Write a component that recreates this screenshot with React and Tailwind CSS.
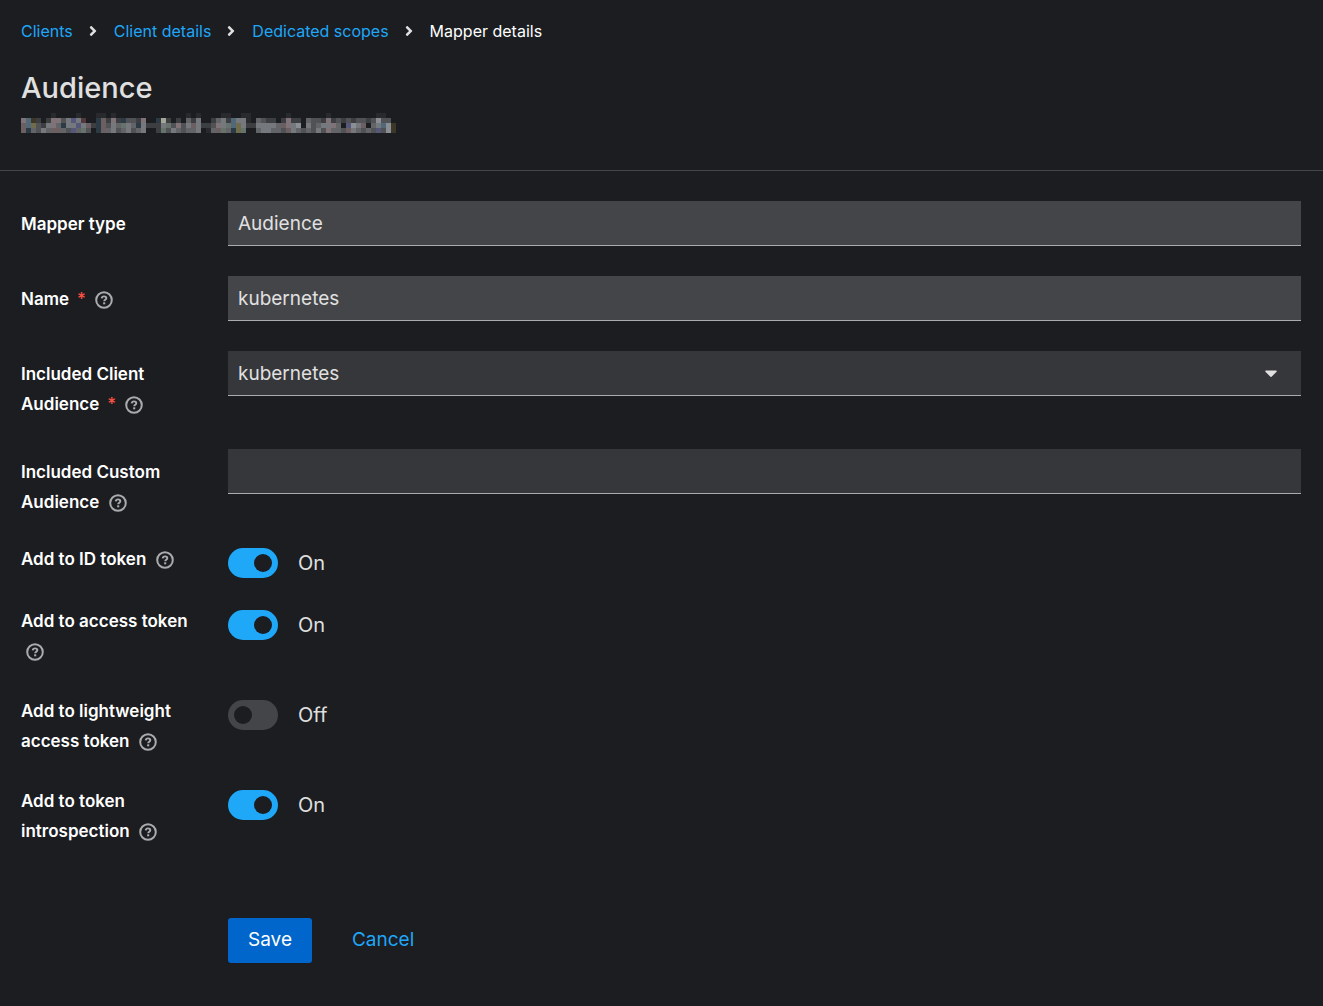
import React, { useState } from "react";
import { FaAngleRight, FaCaretDown } from "react-icons/fa";

const crumbs = ["Clients", "Client details", "Dedicated scopes"];

const switches = [
  { id: "id-token", label: "Add to ID token", on: true },
  { id: "access-token", label: "Add to access token", on: true },
  { id: "lightweight", label: "Add to lightweight access token", on: false },
  { id: "introspection", label: "Add to token introspection", on: true },
];

// redacted id, one letter per block
const palette = {
  d: "#292a2e",
  t: "#2b3a44",
  y: "#3d3728",
  r: "#50383d",
  k: "#3d3e42",
  g: "#505256",
  m: "#636468",
  q: "#6c5f62",
  l: "#75787c",
  p: "#7f7378",
  e: "#66736d",
  b: "#506878",
  v: "#55587a",
  o: "#6f6b4c",
  w: "#8a8f95",
  n: "#a3a595",
};

const blocks = [
  "......d....d...dd.d..............d.d....dd..dd.......d.......d.........dd..",
  "pbyk.kppglvlr..tqkpktggkp..tnk.k.mkl..kmlkblld.mgkk.kpkk.mggkpkgkgkggkgwgg.",
  "qbogklpmtllvlqktqglmelmtlkkklegpglqlkkgplebolkkllllmqplw.lgmllpm.vwlq.mlbwy",
  "qtmglmqqmgvmeg.tqmlgmlgml..keglmgmml.dmqemtoe..mllmmgqlmgmglgpmmgqlmgmgvgwy",
];

function RedactedId() {
  return (
    <svg
      className="block"
      width="375"
      height="20"
      viewBox="0 0 75 4"
      shapeRendering="crispEdges"
      role="img"
      aria-label="Redacted identifier"
    >
      {blocks.map((row, y) =>
        row
          .split("")
          .map((c, x) =>
            c === "." ? null : (
              <rect key={x + "-" + y} x={x} y={y} width="1" height="1" fill={palette[c]} />
            )
          )
      )}
    </svg>
  );
}

function HelpButton({ label }) {
  return (
    <button
      type="button"
      aria-label={"More help for " + label}
      className="ml-[5px] inline-block align-middle text-[#aaabac]"
    >
      <svg width="18" height="18" viewBox="0 0 18 18" fill="none" stroke="currentColor">
        <circle cx="9" cy="9" r="7.8" strokeWidth="2" />
        <path d="M6.7 7.3c.2-1.3 1.1-1.9 2.3-1.9 1.3 0 2.3.7 2.3 1.8 0 1.5-2.1 1.5-2.1 3" strokeWidth="1.9" />
        <path d="M9.2 11.3v2" strokeWidth="2.1" />
      </svg>
    </button>
  );
}

function FieldLabel({ id, label, required, help = true }) {
  return (
    <div className="text-[17px] leading-[30px] font-semibold text-white">
      <label htmlFor={id}>
        {label}
        {required && (
          <span className="ml-2 font-medium text-[#fe5142]" aria-hidden="true">
            *
          </span>
        )}
      </label>
      {help && " "}
      {help && <HelpButton label={label} />}
    </div>
  );
}

function FormRow({ children, ...label }) {
  return (
    <div className="grid grid-cols-[187px_1fr] items-start gap-x-5">
      <div className="pt-2">
        <FieldLabel {...label} />
      </div>
      {children}
    </div>
  );
}

function SwitchRow({ id, label, on }) {
  const [checked, setChecked] = useState(on);

  return (
    <div className="grid grid-cols-[187px_1fr] items-start gap-x-5">
      <div className="pb-0.5">
        <FieldLabel id={id} label={label} />
      </div>
      <label className="flex items-center gap-5 pt-1 text-[20px] leading-[30px]">
        <input
          id={id}
          type="checkbox"
          role="switch"
          checked={checked}
          onChange={(e) => setChecked(e.target.checked)}
          className="flex h-[30px] w-[50px] appearance-none items-center rounded-full bg-[#444548] px-1.5 before:size-[18px] before:rounded-full before:bg-[#1b1d21] checked:justify-end checked:bg-[#1fa7f8]"
        />
        {checked ? "On" : "Off"}
      </label>
    </div>
  );
}

function App() {
  return (
    <div className="min-h-screen bg-[#1b1d21] font-[Inter,sans-serif] text-[#e0e0e0]">
      <header className="border-b border-[#444548] pt-[19px] pr-[22px] pb-[37px] pl-[21px]">
        <nav aria-label="Breadcrumb">
          <ol className="flex flex-wrap items-center text-[16px] leading-6">
            {crumbs.map((name) => (
              <li key={name} className="flex items-center">
                <a href="#" className="text-[#1fa7f8]">
                  {name}
                </a>
                <FaAngleRight className="mr-[13px] ml-3 size-4" />
              </li>
            ))}
            <li className="text-white" aria-current="page">
              Mapper details
            </li>
          </ol>
        </nav>
        <h1 className="mt-[25px] mb-[5px] text-[29px] leading-10 font-medium">Audience</h1>
        <RedactedId />
      </header>

      <form className="pt-[30px] pr-[22px] pb-[43px] pl-[21px]" onSubmit={(e) => e.preventDefault()}>
        <div className="flex flex-col gap-[30px]">
          <FormRow id="mapper-type" label="Mapper type" help={false}>
            <input
              id="mapper-type"
              readOnly
              defaultValue="Audience"
              className="h-[45px] w-full border-b border-[#aaabac] bg-[#444548] px-2.5 text-[19px] outline-none"
            />
          </FormRow>
          <FormRow id="name" label="Name" required>
            <input
              id="name"
              readOnly
              defaultValue="kubernetes"
              className="h-[45px] w-full border-b border-[#aaabac] bg-[#444548] px-2.5 text-[19px] outline-none"
            />
          </FormRow>
          <FormRow id="client-audience" label="Included Client Audience" required>
            <div className="relative">
              <select
                id="client-audience"
                className="block h-[45px] w-full appearance-none border-b border-[#aaabac] bg-[#36373a] px-2.5 pt-0.5 text-[19px] outline-none"
              >
                <option>kubernetes</option>
              </select>
              <FaCaretDown className="pointer-events-none absolute top-3 right-5 size-5" />
            </div>
          </FormRow>
          <FormRow id="custom-audience" label="Included Custom Audience">
            <input
              id="custom-audience"
              className="h-[45px] w-full border-b border-[#aaabac] bg-[#36373a] px-2.5 text-[19px] outline-none"
            />
          </FormRow>
        </div>

        <div className="mt-[27px] flex flex-col gap-7">
          {switches.map((s) => (
            <SwitchRow key={s.id} {...s} />
          ))}
        </div>

        <div className="mt-[70px] ml-[207px] flex gap-5">
          <button type="submit" className="h-[45px] rounded-[3px] bg-[#0066cc] px-5 text-[19px] text-white">
            Save
          </button>
          <button type="button" className="h-[45px] px-5 text-[19px] text-[#1fa7f8]">
            Cancel
          </button>
        </div>
      </form>
    </div>
  );
}

export default App;
